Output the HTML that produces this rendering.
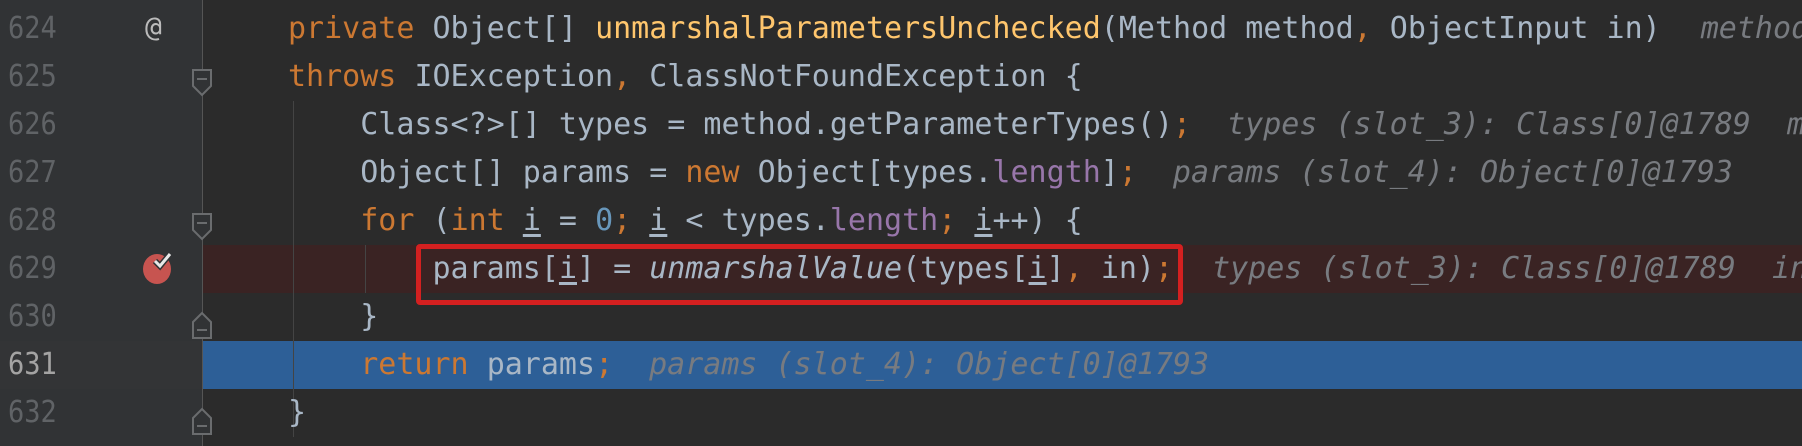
<!DOCTYPE html>
<html><head><meta charset="utf-8"><style>
html,body{margin:0;padding:0;}
body{width:1802px;height:446px;background:#2b2b2b;position:relative;overflow:hidden;font-family:"DejaVu Sans Mono","Liberation Mono",monospace;}
.gut{position:absolute;left:0;top:0;width:202px;height:446px;background:#313335;}
.fold{position:absolute;left:202px;top:0;width:1px;height:446px;background:#555;}
.row{position:absolute;left:0;width:1802px;height:48px;}
.ln{position:absolute;left:8px;top:0;line-height:48px;font-size:30px;color:#606366;transform:scaleX(0.9);transform-origin:0 0;}
.code{position:absolute;left:288px;top:0;line-height:48px;font-size:30px;color:#a9b7c6;white-space:pre;}
.k{color:#cc7832}.m{color:#ffc66d}.f{color:#9876aa}.n{color:#6897bb}.it{font-style:italic}
.u{text-decoration:underline;text-decoration-color:#a9b7c6;text-underline-offset:4px;}
.h{color:#787b80;font-style:italic;margin-left:36px;}
.guide{position:absolute;width:1px;background:#444;}
</style></head><body>
<div class="gut"></div>
<div class="row" style="top:245px;left:203px;width:1599px;background:#3a2323"></div>
<div class="row" style="top:341px;left:203px;width:1599px;background:#2d5f97"></div>
<div class="row" style="top:341px;left:0;width:202px;background:#333436"></div>
<div class="fold"></div>
<div class="guide" style="left:293px;top:101px;height:336px;"></div>
<div class="guide" style="left:365px;top:245px;height:48px;"></div>

<div class="row" style="top:5px"><span class="ln">624</span><span style="position:absolute;left:145px;top:0;line-height:44px;font-size:28px;color:#bbb">@</span>
<span class="code"><span class="k">private </span>Object[] <span class="m">unmarshalParametersUnchecked</span>(Method method<span class="k">, </span>ObjectInput in)<span class="h" style="margin-left:40px">method</span></span></div>
<div class="row" style="top:53px"><span class="ln">625</span>
<span class="code"><span class="k">throws </span>IOException<span class="k">, </span>ClassNotFoundException {</span></div>
<div class="row" style="top:101px"><span class="ln">626</span>
<span class="code">    Class&lt;?&gt;[] types = method.getParameterTypes()<span class="k">;</span><span class="h">types (slot_3): Class[0]@1789  m</span></span></div>
<div class="row" style="top:149px"><span class="ln">627</span>
<span class="code">    Object[] params = <span class="k">new </span>Object[types.<span class="f">length</span>]<span class="k">;</span><span class="h">params (slot_4): Object[0]@1793</span></span></div>
<div class="row" style="top:197px"><span class="ln">628</span>
<span class="code">    <span class="k">for </span>(<span class="k">int </span><span class="u">i</span> = <span class="n">0</span><span class="k">; </span><span class="u">i</span> &lt; types.<span class="f">length</span><span class="k">; </span><span class="u">i</span>++) {</span></div>
<div class="row" style="top:245px"><span class="ln">629</span>
<span class="code">        params[<span class="u">i</span>] = <span class="it">unmarshalValue</span>(types[<span class="u">i</span>]<span class="k">, </span>in)<span class="k">;</span><span class="h" style="margin-left:39px">types (slot_3): Class[0]@1789  in</span></span></div>
<div class="row" style="top:293px"><span class="ln">630</span>
<span class="code">    }</span></div>
<div class="row" style="top:341px"><span class="ln" style="color:#a4a3a3">631</span>
<span class="code">    <span class="k">return </span>params<span class="k">;</span><span class="h">params (slot_4): Object[0]@1793</span></span></div>
<div class="row" style="top:389px"><span class="ln">632</span>
<span class="code">}</span></div>

<div style="position:absolute;left:416px;top:244px;width:757px;height:51px;border:5px solid #d42020;border-radius:4px;"></div>

<svg style="position:absolute;left:0;top:0" width="240" height="446">
<g fill="#313335" stroke="#6a6c6e" stroke-width="2">
<path d="M193 70 H211 V86 L202 95 L193 86 Z"/>
<path d="M193 214 H211 V230 L202 239 L193 230 Z"/>
<path d="M193 322 L202 313 L211 322 V338 H193 Z"/>
<path d="M193 418 L202 409 L211 418 V434 H193 Z"/>
</g>
<g stroke="#6a6c6e" stroke-width="2">
<line x1="197" y1="79" x2="207" y2="79"/>
<line x1="197" y1="223" x2="207" y2="223"/>
<line x1="197" y1="330" x2="207" y2="330"/>
<line x1="197" y1="426" x2="207" y2="426"/>
</g>
<ellipse cx="157" cy="269" rx="14" ry="15" fill="#c75450"/>
<path d="M155 261 L160 266 L170 254" fill="none" stroke="#313335" stroke-width="6"/>
<path d="M155 261 L160 266 L170 254" fill="none" stroke="#e8e8e8" stroke-width="3"/>
</svg>
</body></html>
